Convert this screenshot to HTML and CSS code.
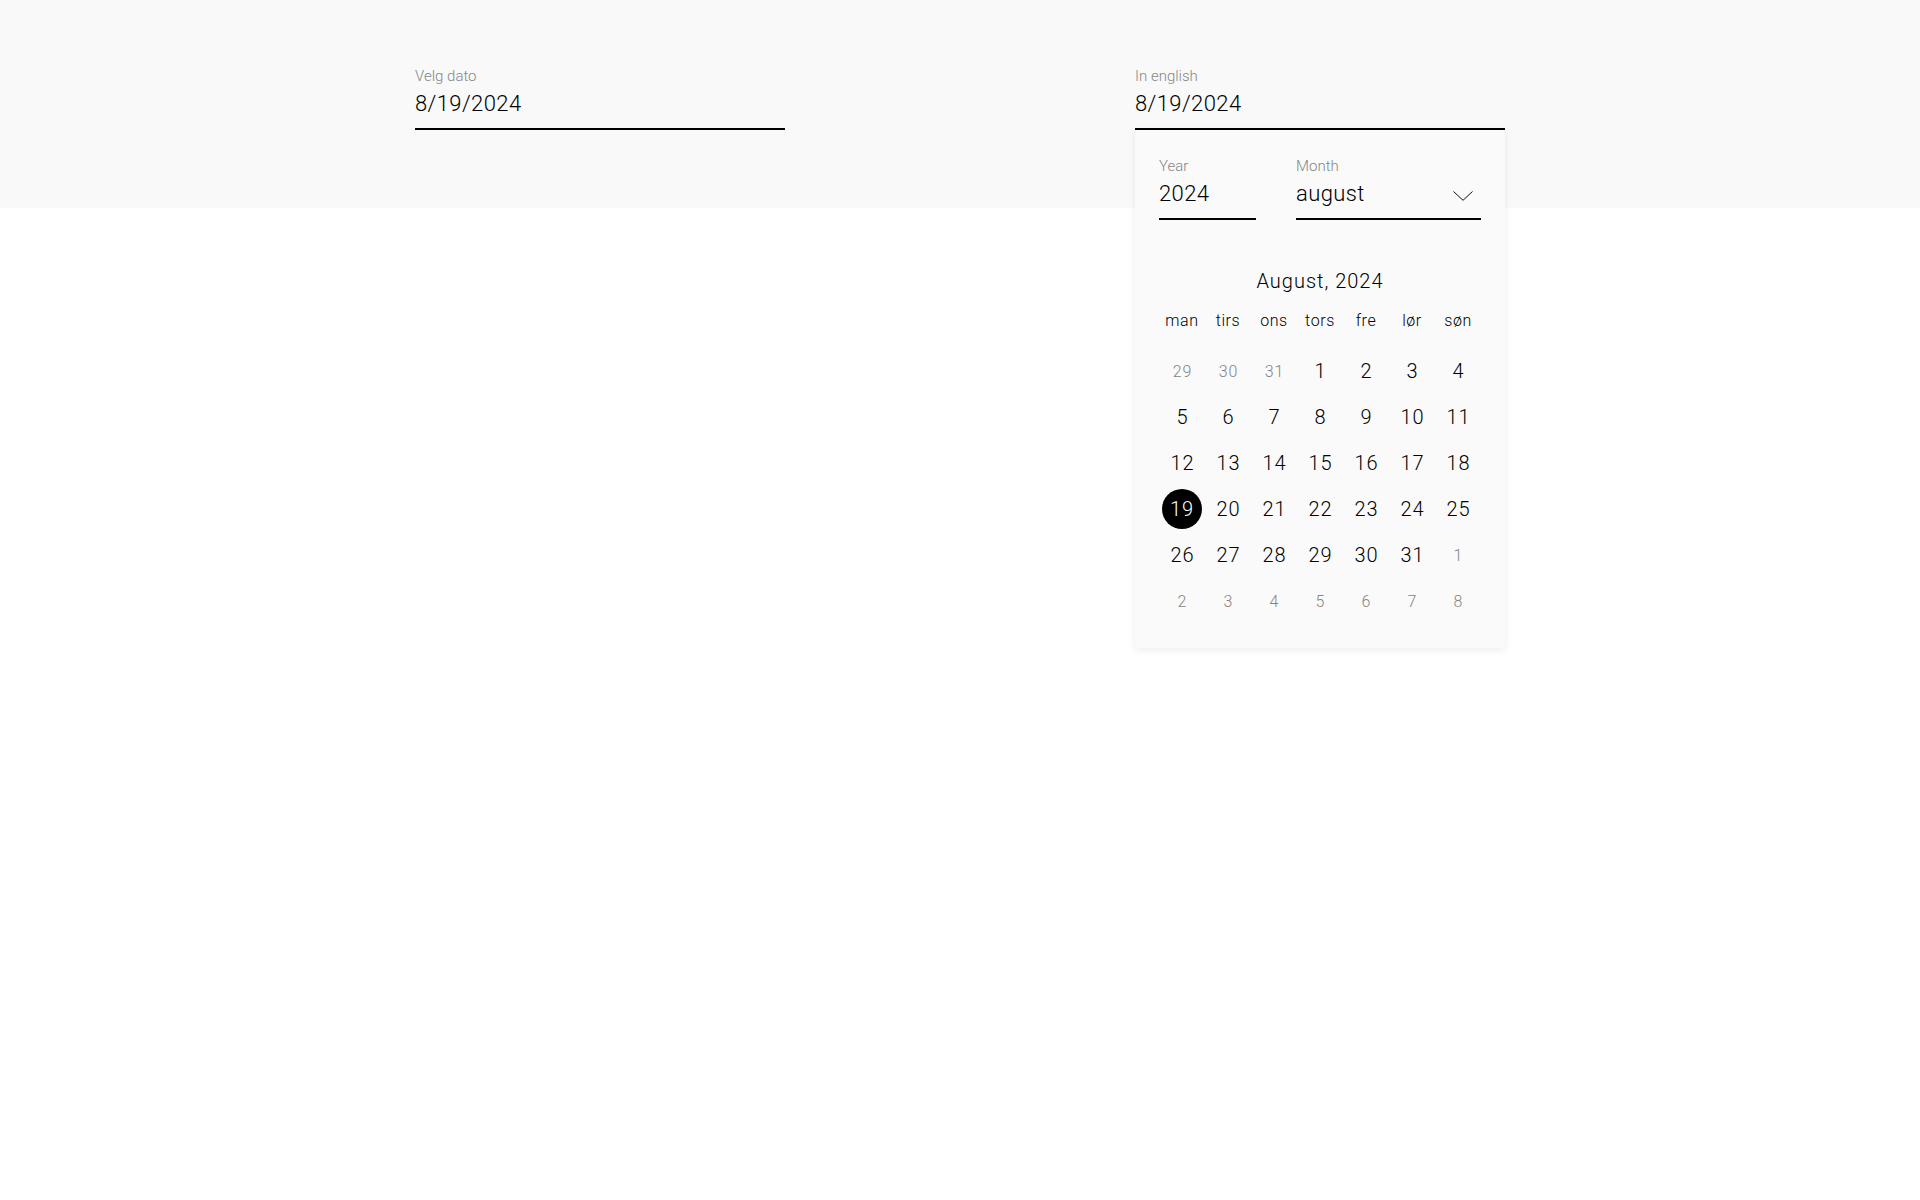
FILE: index.html
```html
<!DOCTYPE html>
<html lang="no">
<head>
<meta charset="utf-8">
<title>Datepicker</title>
<link rel="stylesheet" href="styles.css">
</head>
<body>
<div class="page">
<div class="band">
  <div class="fields">
    <div class="field">
      <div class="label">Velg dato</div>
      <div class="value">8/19/2024</div>
    </div>
    <div class="field">
      <div class="label">In english</div>
      <div class="value">8/19/2024</div>
      <div class="popup">
        <div class="selects">
          <div class="sel sel-year">
            <div class="label">Year</div>
            <div class="value small">2024</div>
          </div>
          <div class="sel sel-month">
            <div class="label">Month</div>
            <div class="value small">august</div>
            <svg class="chev" width="20" height="10" viewBox="0 0 20 10"><polyline points="0.5,0.5 10,9.3 19.5,0.5" fill="none" stroke="#111" stroke-width="1"/></svg>
          </div>
        </div>
        <div class="title">August, 2024</div>
        <div class="weekdays">
          <span>man</span><span>tirs</span><span>ons</span><span>tors</span><span>fre</span><span>lør</span><span>søn</span>
        </div>
        <div class="days">
          <span class="out">29</span><span class="out">30</span><span class="out">31</span><span>1</span><span>2</span><span>3</span><span>4</span>
          <span>5</span><span>6</span><span>7</span><span>8</span><span>9</span><span>10</span><span>11</span>
          <span>12</span><span>13</span><span>14</span><span>15</span><span>16</span><span>17</span><span>18</span>
          <span class="sel-day"><b>19</b></span><span>20</span><span>21</span><span>22</span><span>23</span><span>24</span><span>25</span>
          <span>26</span><span>27</span><span>28</span><span>29</span><span>30</span><span>31</span><span class="out">1</span>
          <span class="out">2</span><span class="out">3</span><span class="out">4</span><span class="out">5</span><span class="out">6</span><span class="out">7</span><span class="out">8</span>
        </div>
      </div>
    </div>
  </div>
</div>
</div>
</body>
</html>
```

FILE: styles.css
```css
html, body {
  margin: 0;
  padding: 0;
  background: #ffffff;
  font-family: Roboto, "Liberation Sans", sans-serif;
  font-weight: 300;
  color: #000000;
}

.page {
  min-height: 1200px;
}

.band {
  background: #f9f9f9;
  height: 208px;
  box-sizing: border-box;
  padding-top: 67px;
}

.fields {
  width: 1090px;
  margin: 0 auto;
  display: flex;
  justify-content: space-between;
}

.field {
  width: 370px;
  position: relative;
}

.label {
  font-size: 15px;
  line-height: 18px;
  color: #858585;
}

.value {
  margin-top: 4px;
  font-size: 22px;
  line-height: 30px;
  padding-bottom: 9px;
  border-bottom: 2px solid #000;
  letter-spacing: 0.4px;
  color: #000;
}

.popup {
  position: absolute;
  top: 100%;
  left: 0;
  width: 370px;
  box-sizing: border-box;
  padding: 27px 24px 24px;
  background: #fafafa;
  box-shadow: 0 2px 8px rgba(0, 0, 0, 0.08);
  z-index: 2;
}

.selects {
  display: flex;
  gap: 40px;
}

.sel {
  position: relative;
}

.sel-year { width: 97px; }
.sel-month { width: 185px; }

.chev {
  position: absolute;
  right: 8px;
  top: 34px;
}

.title {
  margin-top: 47px;
  text-align: center;
  font-size: 20px;
  line-height: 28px;
  letter-spacing: 1px;
}

.weekdays {
  margin-top: 16px;
  display: grid;
  grid-template-columns: repeat(7, 46px);
  font-size: 16px;
  line-height: 20px;
  text-align: center;
  letter-spacing: 0.6px;
}

.days {
  margin-top: 17px;
  display: grid;
  grid-template-columns: repeat(7, 46px);
  grid-auto-rows: 46px;
  font-size: 20px;
  letter-spacing: 1px;
}

.days span {
  display: flex;
  align-items: center;
  justify-content: center;
  padding-left: 1px;
}

.days .out {
  font-size: 16px;
  color: #858585;
}

.days .sel-day {
  padding-left: 0;
}

.days .sel-day b {
  font-weight: 300;
  width: 40px;
  height: 40px;
  border-radius: 50%;
  background: #000;
  color: #fff;
  display: flex;
  align-items: center;
  justify-content: center;
}
```
